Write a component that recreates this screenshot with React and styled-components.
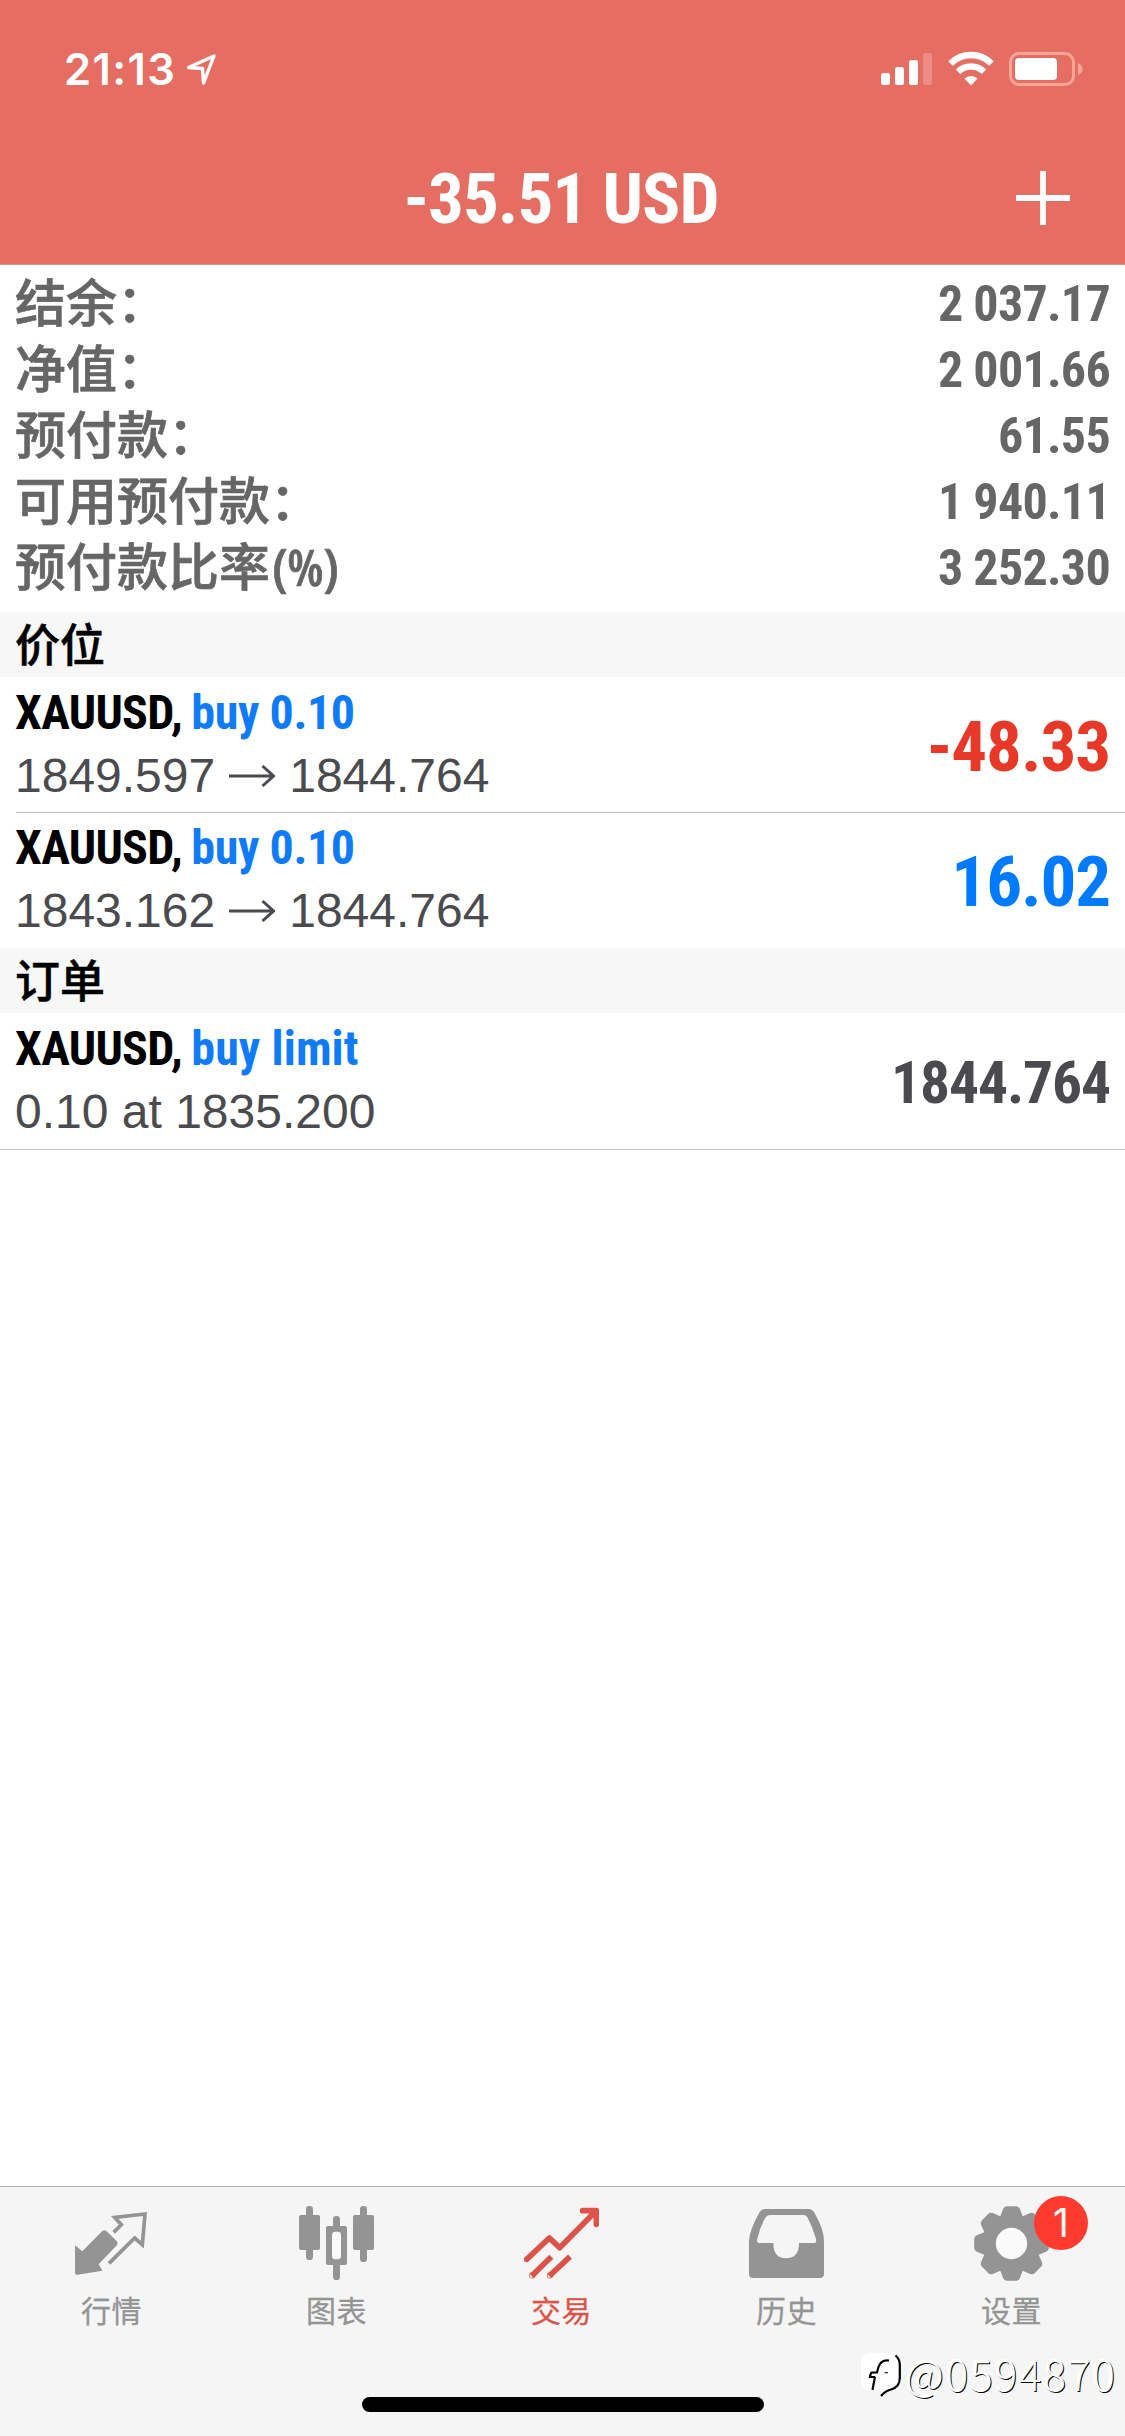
import React from 'react'
import styled, { createGlobalStyle } from 'styled-components'

const summary = [
  { label: '结余：', value: '2 037.17' },
  { label: '净值：', value: '2 001.66' },
  { label: '预付款：', value: '61.55' },
  { label: '可用预付款：', value: '1 940.11' },
  { label: '预付款比率', unit: '(%)', value: '3 252.30' },
]

const positions = [
  { symbol: 'XAUUSD,', side: 'buy 0.10', from: '1849.597', to: '1844.764', profit: '-48.33', color: '#e83828' },
  { symbol: 'XAUUSD,', side: 'buy 0.10', from: '1843.162', to: '1844.764', profit: '16.02', color: '#007aff' },
]

const QuotesIcon = () => (
  <TabSvg viewBox='0 0 225 225'>
    <path fill='currentColor' d='M3 118L25 136L85 75Q91 70 97 75L128 105Q134 111 129 117L74 175Q80 185 85 194L10 206Q3 207 3 200Z' />
    <path fill='none' stroke='currentColor' strokeWidth='11' d='M119 79L142 56L122 34L213 24L205 116L182 96L105 172' />
  </TabSvg>
)

const ChartIcon = () => (
  <TabSvg viewBox='0 0 225 225' fill='currentColor'>
    <rect x='0' y='27' width='63' height='105' rx='6' />
    <rect x='21' y='0' width='21' height='162' rx='10' />
    <rect x='102' y='30' width='21' height='192' rx='10' />
    <rect x='81' y='60' width='63' height='117' rx='6' />
    <rect x='99' y='77' width='27' height='83' rx='10' fill='#fafafa' />
    <rect x='162' y='27' width='63' height='105' rx='6' />
    <rect x='183' y='0' width='21' height='168' rx='10' />
  </TabSvg>
)

const TradeIcon = () => (
  <TabSvg viewBox='0 0 225 225' fill='none' stroke='currentColor' strokeWidth='17' strokeLinejoin='round'>
    <path strokeLinecap='round' d='M8 160L76 96L107 125L215 16M176 14H217V55' />
    <path d='M23 210L82 152M76 210L138 152' />
    <circle cx='25' cy='208' r='1' />
    <circle cx='78' cy='208' r='1' />
  </TabSvg>
)

const HistoryIcon = () => (
  <TabSvg viewBox='0 0 225 225'>
    <path
      fill='currentColor'
      fillRule='evenodd'
      d='M48 9H178Q189 9 195 18Q225 70 225 105V203Q225 216 212 216H13Q0 216 0 203V105Q2 70 32 18Q38 9 48 9ZM64 27Q55 27 50 34Q33 62 25 98Q22 111 32 111H73Q73 157 111 157Q150 157 150 111H194Q204 111 201 98Q190 62 175 34Q171 27 163 27Z'
    />
  </TabSvg>
)

const SettingsIcon = () => (
  <TabSvg viewBox='0 0 225 225'>
    <g transform='translate(112.5 112.5)'>
      <circle r='67' fill='#fafafa' stroke='currentColor' strokeWidth='40' />
      {[0, 45, 90, 135, 180, 225, 270, 315].map((deg) => (
        <path
          key={deg}
          fill='currentColor'
          transform={`rotate(${deg})`}
          d='M-35 -78L-25 -104Q-21 -112 -14 -112H14Q21 -112 25 -104L35 -78Z'
        />
      ))}
    </g>
  </TabSvg>
)

const tabs = [
  { label: '行情', icon: QuotesIcon },
  { label: '图表', icon: ChartIcon },
  { label: '交易', icon: TradeIcon, active: true },
  { label: '历史', icon: HistoryIcon },
  { label: '设置', icon: SettingsIcon, badge: 1 },
]

const App = () => {
  return (
    <>
    <GlobalStyle />
    <Screen>
      <Header>
        <StatusBar>
          <Clock>21:13</Clock>
          <svg width='32' height='34' viewBox='0 0 32 34' fill='none' stroke='#fff' strokeWidth='3.4' strokeLinejoin='round'>
            <path d='M29 4L3.5 15.5L17.5 16.5L18.5 31Z' />
          </svg>
          <StatusIcons>
            <svg width='52' height='36' viewBox='0 0 52 36' fill='#fff'>
              <rect x='0' y='22' width='9' height='12' rx='2.5' />
              <rect x='14' y='16' width='9' height='18' rx='2.5' />
              <rect x='28' y='9' width='9' height='25' rx='2.5' />
              <rect x='42' y='2' width='9' height='32' rx='2.5' opacity='0.22' />
            </svg>
            <svg width='46' height='36' viewBox='0 0 46 36' fill='none' stroke='#fff' strokeWidth='6.4'>
              <path d='M2.5 12.5A29 29 0 0 1 43.5 12.5' />
              <path d='M10 20.8A18.5 18.5 0 0 1 36 20.8' />
              <path fill='#fff' stroke='none' d='M16.5 27.5A9.5 9.5 0 0 1 29.5 27.5L23 34.5Z' />
            </svg>
            <svg width='74' height='36' viewBox='0 0 74 36'>
              <rect x='1.5' y='2.5' width='63' height='31' rx='8.5' fill='none' stroke='#f7a499' strokeWidth='3' />
              <path fill='#f7a499' d='M69 12Q73.5 14 73.5 18Q73.5 22 69 24Z' />
              <rect x='6' y='7' width='42' height='22' rx='4' fill='#fff' />
            </svg>
          </StatusIcons>
        </StatusBar>
        <NavBar>
          <Total>-35.51 USD</Total>
          <AddButton>
            <svg width='54' height='54' viewBox='0 0 54 54' stroke='#fff' strokeWidth='5.8'>
              <path d='M27 0V54M0 27H54' />
            </svg>
          </AddButton>
        </NavBar>
      </Header>

      <Summary>
        {summary.map((item) => (
          <SummaryRow key={item.label}>
            <SummaryLabel>{item.label}{item.unit && <span>{item.unit}</span>}</SummaryLabel>
            <SummaryValue>{item.value}</SummaryValue>
          </SummaryRow>
        ))}
      </Summary>

      <SectionTitle>价位</SectionTitle>
      {positions.map((item) => (
        <Deal key={item.from}>
          <DealInfo>
            <DealName>{item.symbol} <span>{item.side}</span></DealName>
            <DealPrice>
              {item.from}
              <Arrow viewBox='0 0 46 24'>
                <path d='M0 12H44M33.5 2L44.5 12L33.5 22' />
              </Arrow>
              {item.to}
            </DealPrice>
          </DealInfo>
          <DealValue $color={item.color}>{item.profit}</DealValue>
        </Deal>
      ))}

      <SectionTitle>订单</SectionTitle>
      <Deal>
        <DealInfo>
          <DealName $wide>XAUUSD, <span>buy limit</span></DealName>
          <DealPrice>0.10 at 1835.200</DealPrice>
        </DealInfo>
        <DealValue $small $color='#4b4a4f'>1844.764</DealValue>
      </Deal>
      <Divider />

      <TabBar>
        {tabs.map(({ label, icon: Icon, active, badge }) => (
          <Tab key={label} $active={active}>
            <Icon />
            <p>{label}</p>
            {badge && <Badge>{badge}</Badge>}
          </Tab>
        ))}
        <HomeIndicator />
        <Watermark>
          <svg width='44' height='48' viewBox='0 0 44 48' fill='none'>
            <path fill='#fff' d='M10 2H28Q39 2 39 13V29Q38 38 26 40L20 45V40H10Q0 40 0 30V12Q0 2 10 2Z' />
            <path stroke='#000' strokeWidth='2.2' d='M28 9.5Q20 8.5 17.5 16L16 21.5H11Q9.500 22 9 26H14M14 25.5L11.5 39' />
            <path stroke='#000' strokeWidth='1' d='M23.5 21.7H27' />
            <path stroke='#000' strokeWidth='2.2' d='M34.5 4.5Q38.8 8 38.8 14V27Q38.8 36 30 38.5Q24 40 20 45' />
          </svg>
          <span>@0594870</span>
        </Watermark>
      </TabBar>
    </Screen>
    </>
  )
}

const GlobalStyle = createGlobalStyle`
* {
  box-sizing: border-box;
  margin: 0;
  padding: 0;
}

body {
  background: #fff;
  font-family: 'Liberation Sans', 'Noto Sans CJK SC', sans-serif;
}

svg {
  display: block;
  flex-shrink: 0;
}
`;

const condensed = `
font-family: 'Roboto Condensed', 'Roboto', sans-serif;
font-weight: 700;
font-stretch: 75%;
white-space: nowrap;
`;

const Screen = styled.div`
display: flex;
flex-direction: column;
width: 1125px;
height: 2436px;
overflow: hidden;
background: #fff;
`;

const Header = styled.header`
height: 265px;
background: #e66d62;
border-bottom: 1px solid #c99a95;
color: #fff;
`;

const StatusBar = styled.div`
display: flex;
align-items: center;
height: 132px;
padding: 6px 42px 0 64px;
`;

const Clock = styled.p`
width: 121px;
font-family: 'Inter', sans-serif;
font-weight: 600;
font-size: 43.5px;
letter-spacing: 1.4px;
`;

const StatusIcons = styled.div`
display: flex;
gap: 15px;
margin-left: auto;
`;

const NavBar = styled.div`
display: grid;
grid-template-columns: 1fr auto 1fr;
align-items: center;
height: 132px;
padding: 0 55px;
`;

const Total = styled.h1`
${condensed}
grid-column: 2;
font-size: 71px;
letter-spacing: -1px;
padding: 1px 3px 0 0;
`;

const AddButton = styled.button`
justify-self: end;
border: none;
background: none;
`;

const Summary = styled.section`
padding: 6px 15px 11px;
`;

const SummaryRow = styled.div`
display: flex;
justify-content: space-between;
height: 66px;
color: #666;
`;

const SummaryLabel = styled.p`
font-family: 'Noto Sans CJK SC', sans-serif;
font-weight: 500;
font-size: 51px;
line-height: 58px;
-webkit-text-stroke: 0.7px currentColor;

  span {
    font-family: 'Open Sans', sans-serif;
    font-weight: 600;
    font-stretch: 75%;
    line-height: 1;
    margin-left: 2px;
  }
`;

const SummaryValue = styled.p`
${condensed}
font-size: 50px;
line-height: 66px;
letter-spacing: -0.7px;
`;

const SectionTitle = styled.h2`
height: 65px;
padding-left: 15px;
background: #f7f7f7;
color: #000;
font-family: 'Noto Sans CJK SC', sans-serif;
font-weight: 500;
font-size: 45px;
line-height: 62px;
-webkit-text-stroke: 0.5px currentColor;
`;

const Deal = styled.div`
display: flex;
justify-content: space-between;
height: 135px;
margin-left: 16px;
padding: 6px 15px 0 0;

& + & {
  height: 136px;
  padding-top: 5px;
  border-top: 1px solid #c4c4c6;
}
`;

const DealInfo = styled.div`
margin-left: -1px;
white-space: nowrap;
`;

const DealName = styled.h3`
${condensed}
font-size: 48px;
line-height: 60px;
letter-spacing: -0.7px;
word-spacing: -1px;
color: #000;

  span {
    color: #0f7bf8;
    letter-spacing: ${(p) => (p.$wide ? '0.1px' : '-0.4px')};
    word-spacing: 0;
  }
`;

const DealPrice = styled.p`
display: flex;
align-items: center;
font-size: 48px;
line-height: 65px;
color: #4b4b4f;
`;

const Arrow = styled.svg`
width: 46px;
height: 24px;
margin: 0 14px;
fill: none;
stroke: currentColor;
stroke-width: 3;
`;

const DealValue = styled.p`
${condensed}
font-size: ${(p) => (p.$small ? '59.5px' : '71px')};
line-height: 128px;
letter-spacing: -1.1px;
color: ${(p) => p.$color};
`;

const Divider = styled.hr`
border: none;
height: 1px;
margin-top: 1px;
background: #c4c4c6;
`;

const TabBar = styled.nav`
position: relative;
display: grid;
grid-template-columns: repeat(5, 225px);
grid-template-rows: 210px auto;
height: 250px;
margin-top: auto;
border-top: 1px solid #b0b0b0;
background: #f5f5f5;
`;

const Tab = styled.div`
position: relative;
padding: 19px 0 0 74px;
color: ${(p) => (p.$active ? '#dc5347' : '#949494')};

  p {
    width: 75px;
    margin-top: 8px;
    font-family: 'Noto Sans CJK SC', sans-serif;
    font-size: 30px;
    letter-spacing: 0.6px;
    line-height: 40px;
    text-align: center;
    -webkit-text-stroke: 0.3px currentColor;
  }
`;

const TabSvg = styled.svg`
width: 75px;
height: 75px;
`;

const Badge = styled.span`
position: absolute;
top: 9px;
left: 134px;
width: 54px;
height: 54px;
border-radius: 50%;
background: #ff3b30;
color: #fff;
font-family: 'Inter', sans-serif;
font-size: 39px;
line-height: 54px;
text-align: center;
`;

const HomeIndicator = styled.div`
grid-column: 1 / -1;
justify-self: center;
width: 402px;
height: 15px;
border-radius: 8px;
background: #000;
`;

const Watermark = styled.div`
position: absolute;
right: 8px;
bottom: 37px;
display: flex;
align-items: center;

  span {
    margin-top: -4px;
    color: #fff;
    font-family: 'Noto Sans CJK SC', sans-serif;
    font-weight: 300;
    font-size: 42px;
    letter-spacing: 2px;
    line-height: 50px;
    text-shadow: 1px 1px 0.5px #000, -1px -1px 1px #fff;
  }
`;

export default App
